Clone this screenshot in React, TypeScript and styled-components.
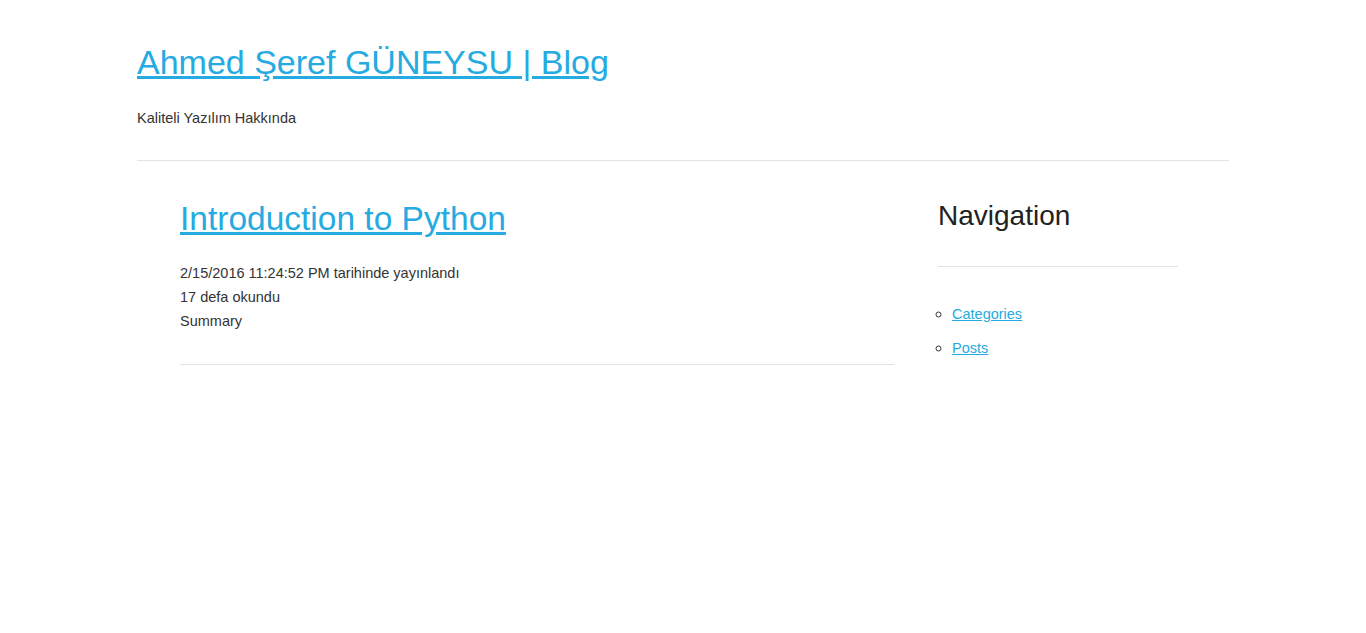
import styled, { createGlobalStyle } from "styled-components";

const GlobalStyle = createGlobalStyle`
  body {
    margin: 0;
    background: #fff;
    font-family: "Liberation Sans", Arial, sans-serif;
    font-size: 14.5px;
    line-height: 24px;
    color: #333;
  }
`;

const linkColor = "#25aae1";

const Page = styled.div`
  width: 1092px;
  margin: 0 auto;
  padding-left: 137px;
  padding-right: 137px;
`;

const Header = styled.header`
  padding-top: 42px;
  padding-bottom: 30px;
  border-bottom: 1px solid #e3e3e3;
`;

const SiteTitle = styled.h1`
  margin: 0;
  font-size: 34px;
  line-height: 40px;
  font-weight: normal;

  a {
    color: ${linkColor};
  }
`;

const Tagline = styled.p`
  margin: 24px 0 0;
`;

const Content = styled.div`
  display: flex;
  padding-left: 43px;
  gap: 44px;
`;

const Main = styled.main`
  width: 714px;
`;

const Article = styled.article`
  padding-top: 38px;
  padding-bottom: 31px;
  border-bottom: 1px solid #e3e3e3;
`;

const PostTitle = styled.h2`
  margin: 0 0 22px;
  font-size: 33.5px;
  line-height: 40px;
  font-weight: normal;

  a {
    color: ${linkColor};
  }
`;

const Meta = styled.p`
  margin: 0;
`;

const Sidebar = styled.aside`
  width: 240px;
`;

const SideHeading = styled.h3`
  margin: 0;
  padding: 37px 0 32px;
  font-size: 28px;
  line-height: 36px;
  font-weight: normal;
  color: #222;
  border-bottom: 1px solid #e3e3e3;
`;

const NavList = styled.ul`
  list-style: circle;
  margin: 35px 0 0;
  padding-left: 14px;
`;

const NavItem = styled.li`
  line-height: 24px;
  margin-bottom: 10px;

  &::marker {
    font-size: 16px;
  }

  a {
    color: ${linkColor};
  }
`;

export default function App() {
  return (
    <>
      <GlobalStyle />
      <Page>
        <Header>
          <SiteTitle>
            <a href="#">Ahmed Şeref GÜNEYSU | Blog</a>
          </SiteTitle>
          <Tagline>Kaliteli Yazılım Hakkında</Tagline>
        </Header>
        <Content>
          <Main>
            <Article>
              <PostTitle>
                <a href="#">Introduction to Python</a>
              </PostTitle>
              <Meta>2/15/2016 11:24:52 PM tarihinde yayınlandı</Meta>
              <Meta>17 defa okundu</Meta>
              <Meta>Summary</Meta>
            </Article>
          </Main>
          <Sidebar>
            <SideHeading>Navigation</SideHeading>
            <NavList>
              <NavItem>
                <a href="#">Categories</a>
              </NavItem>
              <NavItem>
                <a href="#">Posts</a>
              </NavItem>
            </NavList>
          </Sidebar>
        </Content>
      </Page>
    </>
  );
}
